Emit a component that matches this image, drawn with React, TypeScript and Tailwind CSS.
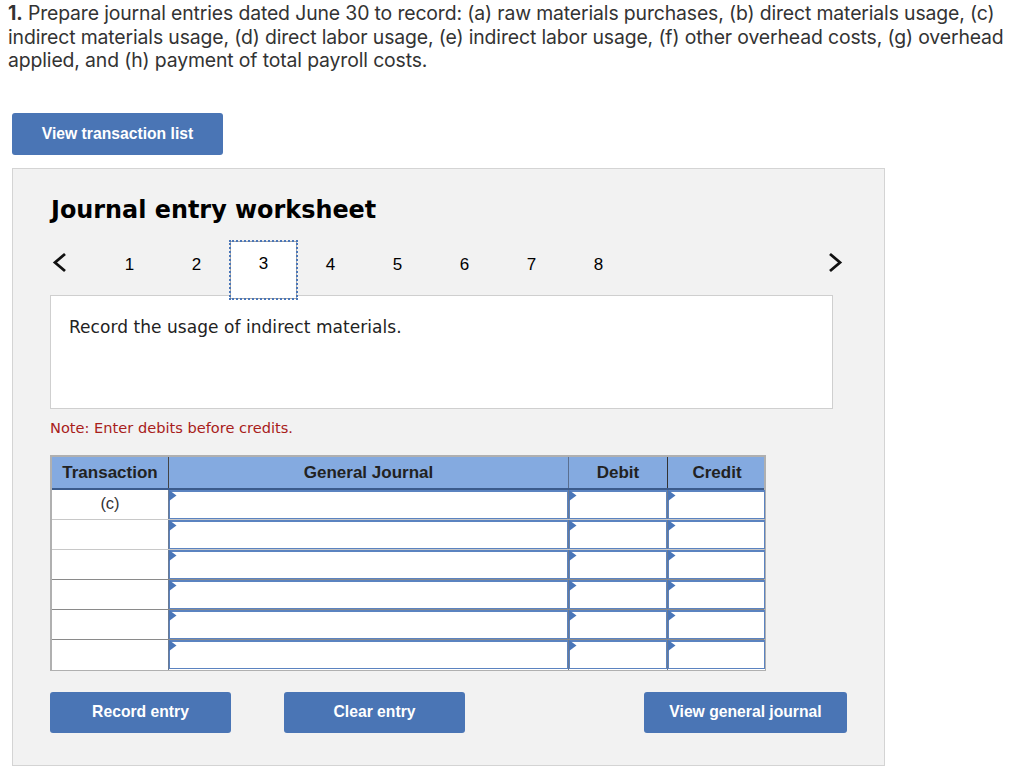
const cols = ["w-[400px]", "w-[99px]", "w-[98px]"];

function Tri() {
  return (
    <svg className="absolute -left-[1px] -top-[2px]" width="8" height="11" viewBox="0 0 8 11">
      <path d="M0 0 L7.5 5.5 L0 11 Z" fill="#4a76b8" />
    </svg>
  );
}

function Cell({ w }: { w: string }) {
  return (
    <div className={`${w} shrink-0 bg-white border-l border-l-[#6b7a92]`}>
      <div className="relative h-[29px] bg-white border-t-2 border-b border-x border-[#5b83c0]">
        <Tri />
      </div>
    </div>
  );
}

function Row({ label, line }: { label?: string; line: string }) {
  return (
    <div className={`flex h-[30px] ${line}`}>
      <div className="w-[116px] shrink-0 bg-white text-center text-[16.5px] leading-[27px] text-[#333]">
        {label}
      </div>
      <Cell w={cols[0]} />
      <Cell w={cols[1]} />
      <Cell w={cols[2]} />
    </div>
  );
}

function Btn({ label, w }: { label: string; w: string }) {
  return (
    <button className={`${w} rounded-[3px] bg-[#4a75b5] text-white font-bold text-[15.7px] font-['Liberation_Sans',sans-serif]`}>
      {label}
    </button>
  );
}

export default function App() {
  return (
    <div className="w-[1024px] h-[769px] overflow-hidden bg-white px-[12px] pt-[2px] font-['Liberation_Sans',sans-serif]">
      <p className="-ml-[4px] w-[1010px] text-[19.4px] leading-[23.5px] text-[#333] font-['Inter',sans-serif] tracking-[-0.13px]">
        <b className="font-bold">1.</b> Prepare journal entries dated June 30 to record: (a) raw materials purchases, (b) direct materials usage, (c) indirect materials usage, (d) direct labor usage, (e) indirect labor usage, (f) other overhead costs, (g) overhead applied, and (h) payment of total payroll costs.
      </p>
      <div className="mt-[40px] flex h-[42px]">
        <Btn label="View transaction list" w="w-[211px]" />
      </div>
      <div className="mt-[13px] w-[873px] h-[598px] bg-[#f2f2f2] border border-[#d4d4d4] pl-[37px] pt-[26px]">
        <h2 className="ml-[1px] text-[23.9px] leading-[30px] font-bold text-black font-['DejaVu_Sans',sans-serif]">Journal entry worksheet</h2>
        <div className="mt-[16px] h-[58px] flex items-start relative">
          <svg className="mt-[11px] ml-[2px]" width="16" height="22" viewBox="0 0 16 22" fill="none" stroke="#111" strokeWidth="2.8">
            <path d="M13 2 L3 10.5 L13 19" />
          </svg>
          <div className="ml-[28px] flex">
            {[1, 2, 3, 4, 5, 6, 7, 8].map((n) => (
              <div
                key={n}
                className={`w-[67px] text-center text-[17px] text-black ${n === 3 ? "h-[58px] bg-white outline-2 outline-dotted outline-[#4a76b8] -outline-offset-1 border border-[#a8a8a8] leading-[44px] relative z-10" : "leading-[47px]"}`}
              >
                {n}
              </div>
            ))}
          </div>
          <svg className="absolute left-[777px] top-[11px]" width="16" height="22" viewBox="0 0 16 22" fill="none" stroke="#111" strokeWidth="2.8">
            <path d="M3 2 L13 10.5 L3 19" />
          </svg>
        </div>
        <div className="-mt-[4px] w-[783px] h-[114px] bg-white border border-[#cfcfcf] pl-[18px] pt-[21px] text-[17px] leading-[20px] tracking-[0.05px] text-[#222] font-['DejaVu_Sans',sans-serif]">
          Record the usage of indirect materials.
        </div>
        <p className="mt-[10px] text-[14.6px] leading-[18px] text-[#a8201a] font-['DejaVu_Sans',sans-serif]">Note: Enter debits before credits.</p>
        <div className="mt-[18px] w-[716px] border-2 border-[#b0b0b0] border-b bg-white">
          <div className="flex h-[33px] bg-[#84aae0] text-[#222] font-bold text-[17px] leading-[31px] text-center border-b-2 border-[#3b5b8c]">
            <div className="w-[117px] shrink-0 border-r border-[#444]">Transaction</div>
            <div className={`${cols[0]} shrink-0 border-r border-[#5a6f90]`}>General Journal</div>
            <div className={`${cols[1]} shrink-0 border-r border-[#333]`}>Debit</div>
            <div className={`${cols[2]} shrink-0`}>Credit</div>
          </div>
          <Row label="(c)" line="border-b border-[#c8c8c8]" />
          <Row line="border-b border-[#c8c8c8]" />
          <Row line="border-b border-[#8a8a8a]" />
          <Row line="border-b border-[#8a8a8a]" />
          <Row line="border-b border-[#8a8a8a]" />
          <Row line="" />
        </div>
        <div className="mt-[21px] h-[41px] w-[797px] flex">
          <Btn label="Record entry" w="w-[181px]" />
          <div className="ml-[53px] flex"><Btn label="Clear entry" w="w-[181px]" /></div>
          <div className="ml-auto flex"><Btn label="View general journal" w="w-[203px]" /></div>
        </div>
      </div>
    </div>
  );
}
